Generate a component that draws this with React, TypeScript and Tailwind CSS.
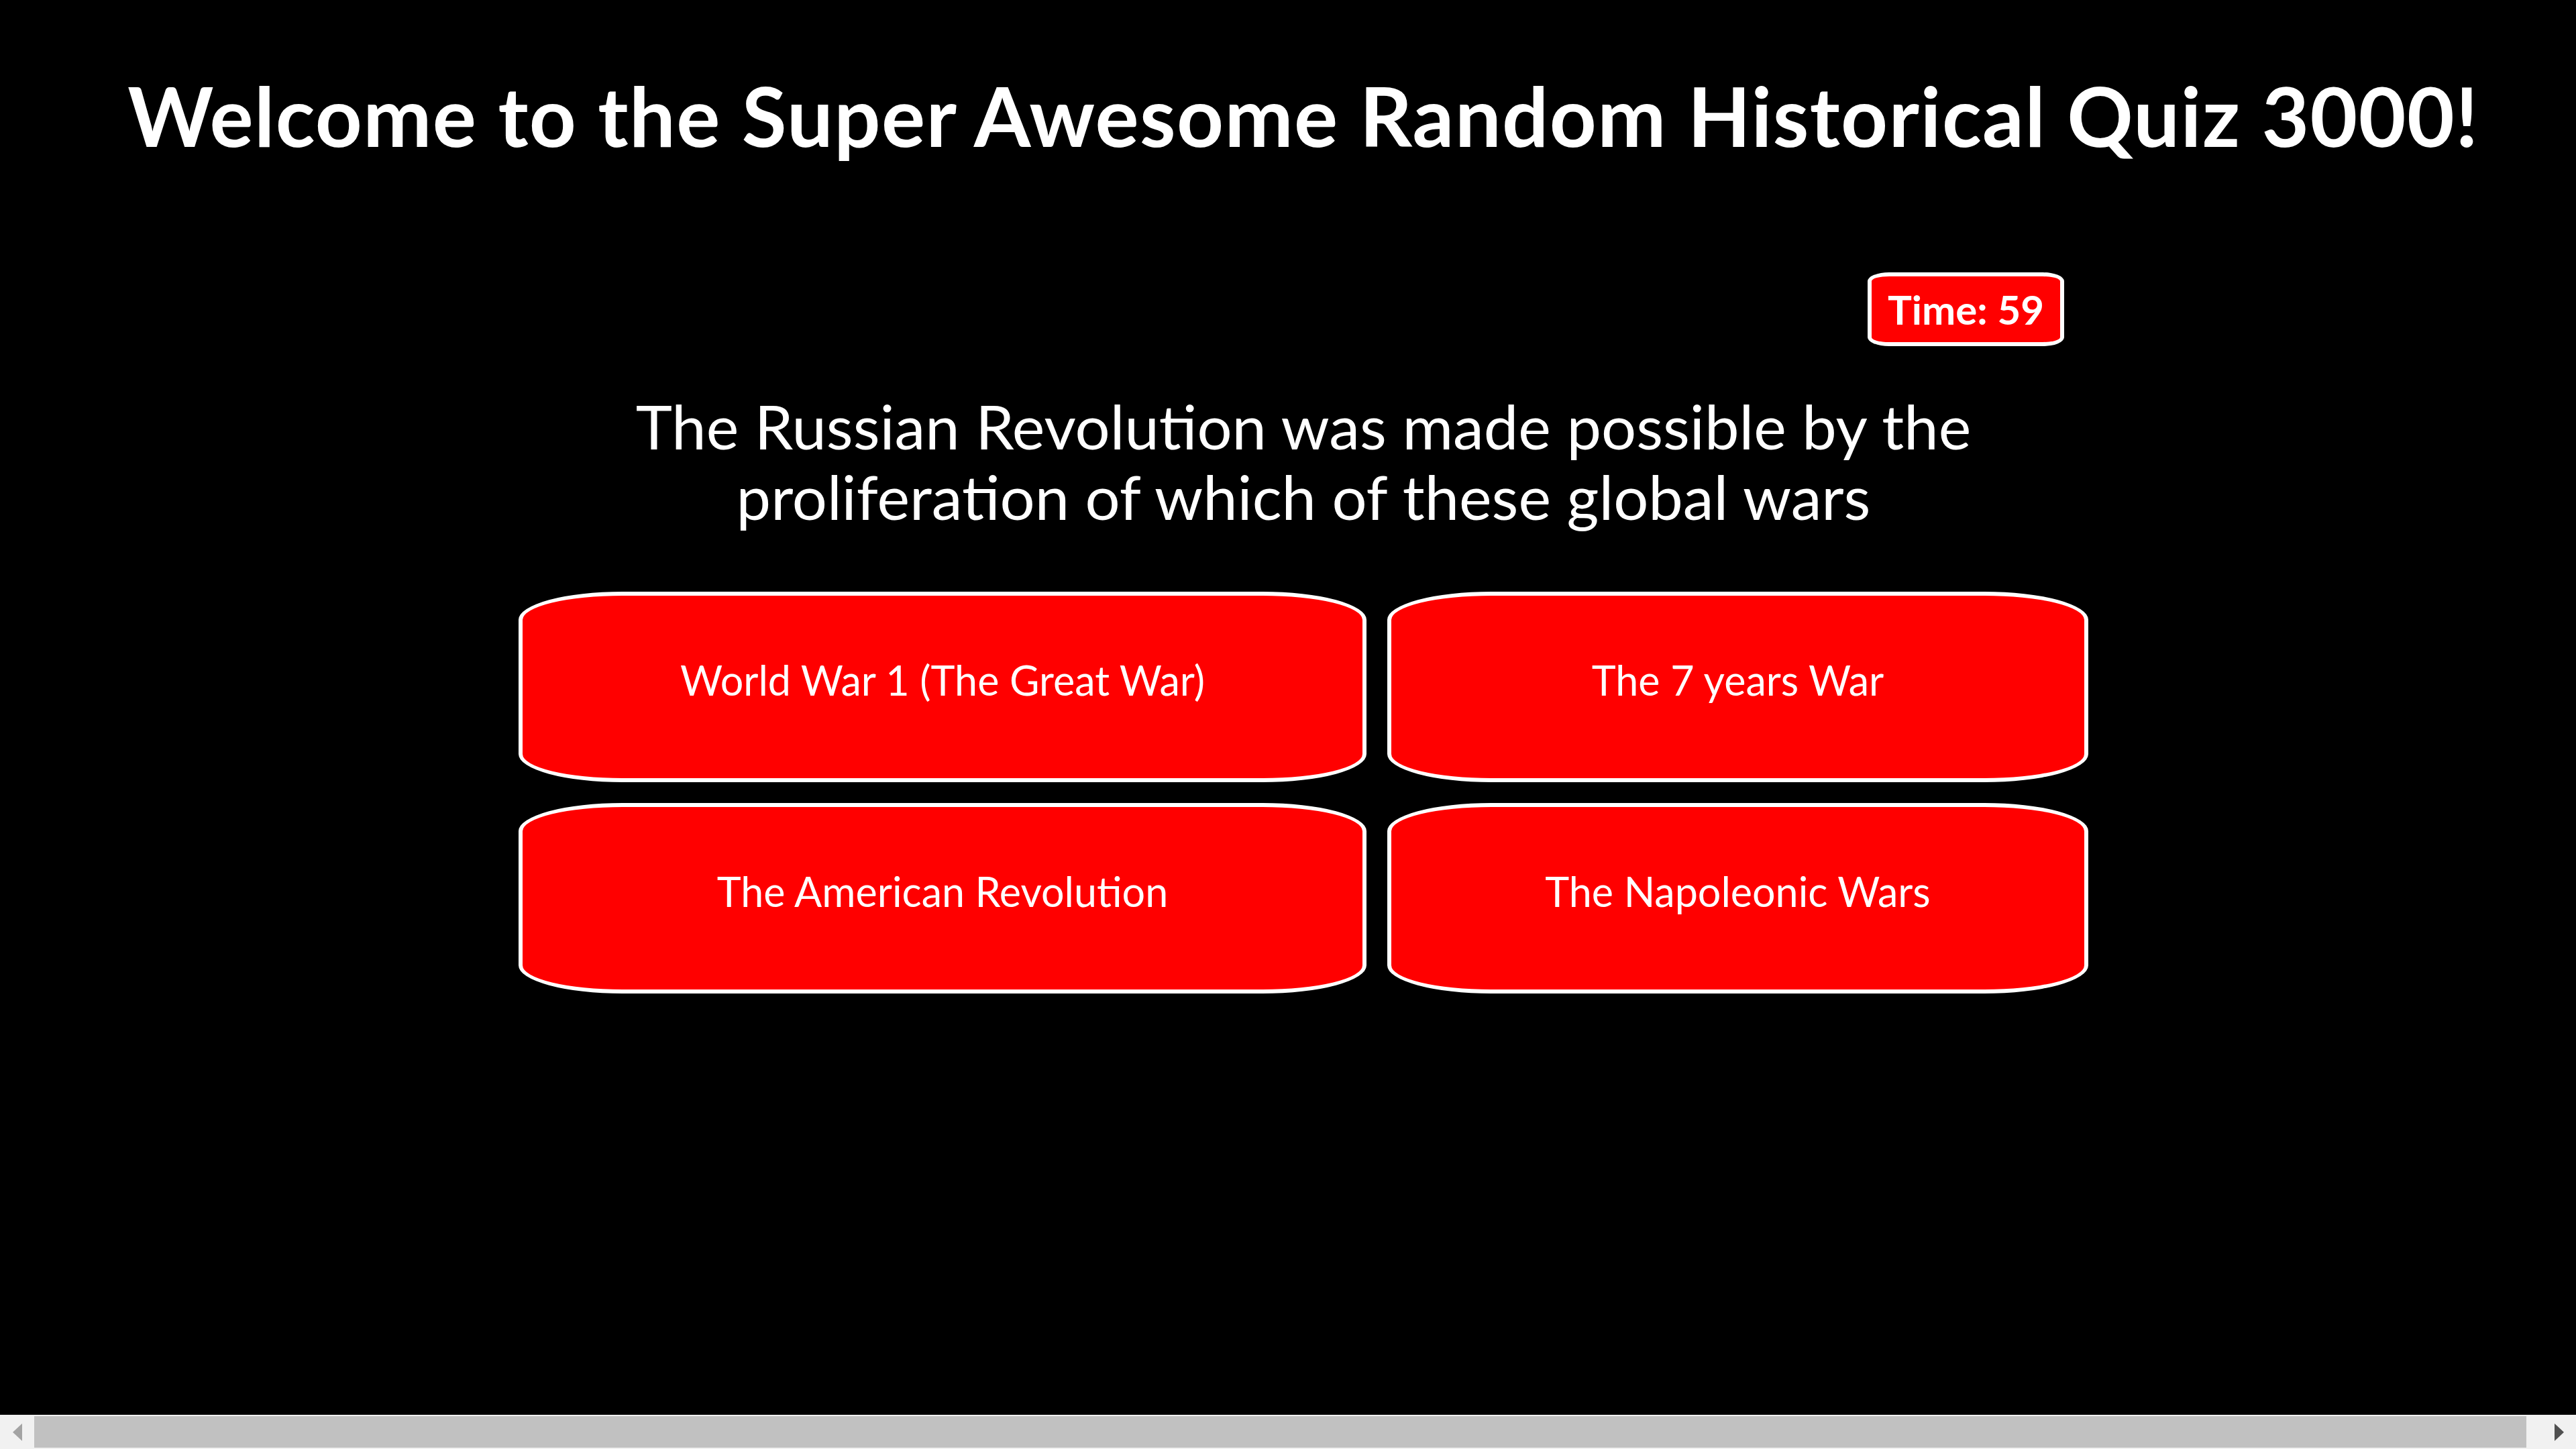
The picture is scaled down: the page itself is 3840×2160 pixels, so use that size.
import React from "react";

const answers = [
  "World War 1 (The Great War)",
  "The 7 years War",
  "The American Revolution",
  "The Napoleonic Wars",
];

export default function App() {
  return (
    <div className="w-full h-screen overflow-hidden bg-black flex flex-col" style={{ fontFamily: "Lato, 'Open Sans', sans-serif" }}>
      <div className="flex-1 w-[3886px] flex flex-col items-center text-white">
        <h1 className="pt-[100px] text-[122px] tracking-[1.4px] font-bold leading-[144px] whitespace-nowrap">
          Welcome to the Super Awesome Random Historical Quiz 3000!
        </h1>
        <div className="w-[2268px] flex justify-end mt-[162px]">
          <div className="bg-[#ff0000] border-[6px] border-white rounded-[11%/12%] px-[24px] py-[13px] text-[60px] font-bold leading-[72px]">
            Time: 59
          </div>
        </div>
        <p className="mt-[66px] max-w-[2268px] text-center text-[92px] leading-[105px]">
          The Russian Revolution was made possible by the proliferation of which of these global wars
        </p>
        <div className="mt-[90px] grid grid-cols-[1264px_1045px] gap-x-[31px] gap-y-[31px]">
          {answers.map((a) => (
            <button
              key={a}
              className="h-[284px] bg-[#ff0000] border-[6px] border-white rounded-[155px/42px] pt-[89px] text-[61px] leading-[74px] text-white text-center flex justify-center items-start"
            >
              {a}
            </button>
          ))}
        </div>
      </div>
      <div className="h-[51px] bg-[#f1f1f1] flex items-stretch shrink-0">
        <div className="w-[51px] flex items-center justify-center">
          <svg width="14" height="26" viewBox="0 0 14 26">
            <polygon points="14,0 14,26 0,13" fill="#a3a3a3" />
          </svg>
        </div>
        <div className="flex-1 py-[2px]">
          <div className="h-full w-[3715px] bg-[#c1c1c1]" />
        </div>
        <div className="w-[51px] flex items-center justify-center">
          <svg width="14" height="26" viewBox="0 0 14 26">
            <polygon points="0,0 0,26 14,13" fill="#505050" />
          </svg>
        </div>
      </div>
    </div>
  );
}
